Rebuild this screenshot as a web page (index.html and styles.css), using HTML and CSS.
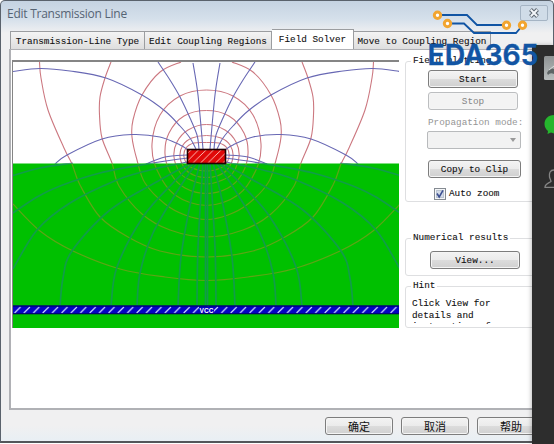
FILE: index.html
```html
<!DOCTYPE html>
<html lang="en">
<head>
  <meta charset="UTF-8" />
  <title>Edit Transmission Line</title>
  <link rel="stylesheet" href="styles.css">
</head>
<body>
  <div class="window">
    <div class="titlebar">
      <span class="title">Edit Transmission Line</span>
      <button class="close" aria-label="Close">
        <svg width="12" height="10" viewBox="0 0 12 10">
          <path d="M2.5 1.5 L9.5 8.5 M9.5 1.5 L2.5 8.5" stroke="#5d6670" stroke-width="4" />
          <path d="M2.8 1.8 L9.2 8.2 M9.2 1.8 L2.8 8.2" stroke="#f4f7fa" stroke-width="2" />
        </svg>
      </button>
    </div>

    <div class="tabs">
      <div class="tab tab-type">Transmission-Line Type</div>
      <div class="tab tab-edit">Edit Coupling Regions</div>
      <div class="tab tab-field active">Field Solver</div>
      <div class="tab tab-move">Move to Coupling Region</div>
    </div>

    <div class="page">
      <svg class="plot" width="386" height="266" viewBox="13 62 386 266">
        <defs>
          <pattern id="hatch-red" width="7.5" height="14" patternUnits="userSpaceOnUse" x="187" y="149">
            <path d="M-9 14 L5 0 M-1.5 14 L12.5 0 M6 14 L20 0" stroke="#ffc4bc" stroke-width="0.9" />
          </pattern>
          <pattern id="hatch-blue" width="9.4" height="8" patternUnits="userSpaceOnUse" x="13" y="306">
            <path d="M1.5 7 L7.5 1" stroke="#c8d0ff" stroke-width="1.1" />
          </pattern>
          <clipPath id="air"><rect x="13" y="62" width="386" height="101.500" /></clipPath>
          <clipPath id="board"><rect x="13" y="163.500" width="386" height="142" /></clipPath>
        </defs>
        <rect x="13" y="61" width="386" height="103" fill="#fff" />
        <rect x="13" y="163.500" width="386" height="165" fill="#00c000" />
        <g id="lines-air" clip-path="url(#air)"></g>
        <g id="lines-board" clip-path="url(#board)"></g>
        <rect x="187.500" y="149.500" width="38" height="14" fill="#e00808" />
        <rect x="187.500" y="149.500" width="38" height="14" fill="url(#hatch-red)" stroke="#200000" stroke-width="1.600" />
        <rect x="13" y="305.500" width="386" height="8.500" fill="#0404c4" />
        <rect x="13" y="306" width="386" height="8" fill="url(#hatch-blue)" />
        <path d="M13 306 H399 M13 313.800 H399" stroke="#000058" stroke-width="1" />
        <rect x="199" y="307" width="15" height="6" fill="#0404c4" />
        <text x="199.500" y="312.500" class="net" textLength="14">VCC</text>
      </svg>

      <div class="side">
        <fieldset class="group plotting">
          <legend>Field plotting</legend>
          <button class="btn">Start</button>
          <button class="btn disabled">Stop</button>
          <label class="mode">Propagation mode:</label>
          <div class="select"><i></i></div>
          <button class="btn clip">Copy to Clip</button>
          <label class="check">
            <svg width="12" height="12" viewBox="0 0 12 12">
              <rect x="0.500" y="0.500" width="11" height="11" fill="#f4f6f8" stroke="#858b92" />
              <rect x="2.500" y="2.500" width="7" height="7" fill="#d3dbe8" stroke="#bac3d0" />
              <path d="M3 5.500 L5.200 9 L9 2.300" fill="none" stroke="#3c4f91" stroke-width="1.600" />
            </svg>
            Auto zoom
          </label>
        </fieldset>
        <fieldset class="group numerical">
          <legend>Numerical results</legend>
          <button class="btn">View...</button>
        </fieldset>
        <fieldset class="group hint">
          <legend>Hint</legend>
          <p>Click View for<br>details and<br>instructions for</p>
        </fieldset>
      </div>
    </div>

    <div class="footer">
      <button class="btn">确定</button>
      <button class="btn">取消</button>
      <button class="btn">帮助</button>
    </div>
  </div>

  <div class="dock">
    <svg width="22" height="399" viewBox="532 45 22 399">
      <defs>
        <linearGradient id="thumb" x1="0" y1="0" x2="0" y2="1">
          <stop offset="0" stop-color="#8f9394" />
          <stop offset="1" stop-color="#b9bebe" />
        </linearGradient>
      </defs>
      <rect x="544" y="56" width="12" height="24" rx="1.500" fill="url(#thumb)" />
      <path d="M547 73 Q550 67 554 69 V74 Q550 72 548 75 Z" fill="#5e6465" />
      <path d="M549 70 L554 66" stroke="#d9dddd" />
      <path d="M554 115 C548 115 544.500 119 544.500 124 C544.500 127 546 129.500 548 131 L547.500 134 L551 132.500 L554 133.500 Z" fill="#25b52d" />
      <path d="M554 170 C550 170 549 173 549.500 177 C550 179 551 180 551 181.500 C549 183 545 183.500 545 187.300 H554" fill="none" stroke="#858585" stroke-width="1.300" />
    </svg>
  </div>

  <svg class="logo" width="116" height="62" viewBox="426 8 116 62">
    <g fill="none" stroke="#1155a4" stroke-width="1.800">
      <path d="M438 15 H467 L477 25 H506" />
      <path d="M448 23.500 H464 L474 33 H516 L522 26" />
    </g>
    <g fill="#fff" stroke="#f2a530" stroke-width="3">
      <circle cx="437.500" cy="15.300" r="3.200" />
      <circle cx="447.500" cy="23.500" r="3.200" />
      <circle cx="506.500" cy="25.300" r="3.200" />
      <circle cx="522.500" cy="25.300" r="3.200" />
    </g>
    <text x="427.500" y="65" textLength="111" lengthAdjust="spacingAndGlyphs">EDA365</text>
  </svg>

  <script src="plot.js"></script>
</body>
</html>
```
FILE: plot.js
```
// left half of every line, the right half is mirrored around the conductor
const AXIS = 206.5;

const potential = [
  [[13, 204], [40, 231], [73, 251], [120, 269], [165, 277], [206.5, 280.500]],
  [[39.5, 62], [41, 78], [48, 110], [64, 148], [72, 164], [80, 185], [100, 217], [128, 237], [160, 251], [206.5, 257]],
  [[111, 62], [105, 78], [100, 97], [99.5, 115], [102, 138], [112, 163], [119, 186], [142, 214], [170, 230], [206.5, 237]],
  [[181, 62], [160, 72], [142, 95], [133, 120], [132, 137], [137, 160], [145, 183], [165, 204], [185, 215], [206.5, 219.5]],
  [[206.5, 90], [180, 96], [160, 115], [152, 144], [157, 170], [175, 195], [206.5, 205.5]],
  [[206.5, 110.5], [184, 116], [169, 133], [165, 154], [171, 174], [185, 188], [206.5, 193.5]],
  [[206.5, 124.5], [188, 130], [177, 142], [174, 157], [181, 174], [193, 181], [206.5, 184]],
  [[206.5, 135.5], [192, 138], [183, 145], [180, 157], [186, 170], [196, 176], [206.5, 177.5]],
  [[206.5, 142.5], [194, 143], [186, 148], [184, 157], [189, 166], [198, 170], [206.5, 171]]
];

const field = [
  [[13, 71.5], [40, 68.5], [70, 71], [106, 78], [142, 95], [165, 111], [180, 126], [190, 138], [196, 149]],
  [[55, 164], [67, 155], [102, 139], [132, 134.5], [160, 137], [180, 145], [188, 150]],
  [[146, 164], [165, 157], [187, 155]],
  [[158, 62], [170, 80], [180, 97], [190, 118], [197, 135], [199, 149]],
  [[193, 63], [198, 95], [203, 149]],
  [[13, 213], [37, 197], [60, 186], [100, 173], [147, 164], [187, 158]],
  [[13, 269], [37, 230], [70, 203], [117, 180], [150, 170], [187, 162]],
  [[13, 175.500], [40, 168], [73, 163]],
  [[60, 306], [63, 278], [72, 251], [110, 210], [160, 180], [191, 163]],
  [[111, 306], [117, 267], [143, 217], [173, 183], [194, 163]],
  [[137, 306], [140, 273], [153, 233], [180, 187], [197, 163]],
  [[178, 306], [181, 257], [191, 200], [200, 163]],
  [[197, 306], [198, 247], [203, 163]],
  [[205.5, 306], [205.5, 163]]
];

// Catmull-Rom through the points
function toPath(pts) {
  let d = `M${pts[0]}`;
  for (let i = 0; i < pts.length - 1; i++) {
    const a = pts[i - 1] || pts[i], b = pts[i], c = pts[i + 1], e = pts[i + 2] || c;
    // keep the line level where it crosses the axis
    let x1 = b[0] + (c[0] - a[0]) / 6, y1 = b[1] + (c[1] - a[1]) / 6;
    let x2 = c[0] - (e[0] - b[0]) / 6, y2 = c[1] - (e[1] - b[1]) / 6;
    if (b[0] === AXIS) {
      x1 = b[0] + (c[0] - b[0]) / 3;
      y1 = b[1];
    }
    if (c[0] === AXIS) {
      x2 = c[0] - (c[0] - b[0]) / 3;
      y2 = c[1];
    }
    d += `C${x1} ${y1} ${x2} ${y2} ${c}`;
  }
  return d;
}

function draw(id, className, lines) {
  let html = "";
  lines.forEach(pts => {
    const mirrored = pts.map(([x, y]) => [2 * AXIS - x, y]);
    html += `<path class="${className}" d="${toPath(pts)}" /><path class="${className}" d="${toPath(mirrored)}" />`;
  });
  document.getElementById(id).innerHTML += html;
}

["lines-air", "lines-board"].forEach(id => {
  draw(id, "potential", potential);
  draw(id, "field", field);
});
```
FILE: styles.css
```css
* {
  box-sizing: border-box;
}

body {
  margin: 0;
  width: 554px;
  height: 444px;
  position: relative;
  overflow: hidden;
  background: #fff;
  font-family: "Liberation Mono", monospace;
  font-size: 9.35px;
  color: #111;
}

.window {
  width: 554px;
  height: 443px;
  display: flex;
  flex-direction: column;
  border: 1px solid #5a626c;
  border-bottom: 2px solid #54565a;
  border-radius: 5px 5px 0 0;
  background: linear-gradient(#c5d3e2 0, #d5e0eb 18px, #f0f0f1 32px, #f0f0f1 425px, #e8eff4);
}

.titlebar {
  flex: none;
  height: 28px;
  display: flex;
  justify-content: space-between;
  align-items: flex-start;
  padding: 4px 5px 0 6px;
}

.title {
  font: 12px/17px "Open Sans", sans-serif;
  color: #566474;
  letter-spacing: -0.25px;
}

.close {
  width: 28px;
  height: 16px;
  display: flex;
  align-items: center;
  justify-content: center;
  padding: 0;
  border: 1px solid #a5b4c4;
  border-radius: 2px;
  background: #d0dce8;
}

.tabs {
  flex: none;
  height: 20px;
  display: flex;
  align-items: flex-end;
  padding-left: 9px;
}

.tab {
  height: 18px;
  border: 1px solid #9b9da0;
  border-left-width: 0;
  border-bottom: 0;
  background: linear-gradient(#f4f4f4, #dedede);
  text-align: center;
  line-height: 19px;
  white-space: nowrap;
  -webkit-text-stroke: 0.1px #111;
}

.tab-type {
  width: 135px;
  border-left-width: 1px;
}

.tab-edit {
  width: 127px;
}

.tab-field {
  width: 82px;
}

.tab-move {
  width: 137px;
}

.tab.active {
  height: 20px;
  background: #fff;
}

.page {
  flex: none;
  height: 361px;
  margin-left: 8px;
  display: flex;
  align-items: flex-start;
  border: 1px solid #b0b1b5;
  border-width: 1px 0 2px 2px;
  background: #fff;
}

.plot {
  flex: none;
  margin: 10px 0 0 1px;
  border: 1px solid #858585;
  border-width: 2px 0 0 1px;
  box-sizing: content-box;
}

.potential,
.field {
  fill: none;
  stroke-width: 1.1;
}

.potential {
  stroke: #cc7880;
}

.field {
  stroke: #6868b4;
}

#lines-board .potential {
  stroke: #5da515;
  stroke-width: 1.2;
}

#lines-board .field {
  stroke: #109d49;
  stroke-width: 1.7;
}

.net {
  font: bold 6.5px "Liberation Sans", sans-serif;
  fill: #fff;
}

.side {
  width: 150px;
  margin-left: 6px;
  padding-top: 5px;
}

.group {
  width: 150px;
  margin: 0;
  padding: 0 0 0 22px;
  border: 1px solid #dedfe1;
  border-radius: 3px;
}

.group legend {
  margin-left: -17px;
  padding: 0 2px;
  height: 12px;
  line-height: 12px;
  white-space: nowrap;
  -webkit-text-stroke: 0.1px #111;
}

.plotting {
  height: 147px;
  padding-top: 3px;
}

.numerical {
  height: 44px;
  margin-top: 30px;
}

.hint {
  height: 48px;
  margin-top: 4px;
}

.btn {
  display: block;
  width: 90px;
  height: 18px;
  padding: 0;
  border: 1px solid #7d7d7d;
  border-radius: 3px;
  background: linear-gradient(#f3f3f3 0, #ebebeb 50%, #dcdcdc 50%, #d0d0d0);
  box-shadow: inset 0 0 0 1px #f5f5f5;
  font: 9.35px/15px "Liberation Mono", "Noto Sans CJK SC", monospace;
  color: #111;
  -webkit-text-stroke: 0.1px #111;
}

.plotting .btn {
  margin-bottom: 4px;
}

.plotting .btn.disabled {
  border-color: #bcbec0;
  background: #f3f3f3;
  color: #858585;
  -webkit-text-stroke: 0;
}

.mode {
  display: block;
  height: 17px;
  line-height: 17px;
  color: #959595;
}

.select {
  width: 94px;
  height: 18px;
  margin-left: -1px;
  display: flex;
  align-items: center;
  justify-content: flex-end;
  padding-right: 4px;
  border: 1px solid #b8babc;
  border-radius: 2px;
  background: #f2f2f2;
}

.select i {
  border: 3px solid transparent;
  border-top: 4px solid #999;
  border-bottom: 0;
}

.plotting .clip {
  width: 93px;
  margin: 11px 0 10px;
}

.check {
  display: flex;
  align-items: center;
  gap: 3px;
  padding-left: 6px;
  line-height: 12px;
  -webkit-text-stroke: 0.1px #111;
}

.numerical .btn {
  margin: 7px 0 0 2px;
}

.hint p {
  height: 26px;
  margin: 6px 0 0 -16px;
  overflow: hidden;
  line-height: 11.5px;
  -webkit-text-stroke: 0.1px #111;
}

.footer {
  display: flex;
  gap: 8px;
  padding: 7px 0 0 324px;
}

.footer .btn {
  flex: none;
  width: 68px;
  font-family: "Noto Sans CJK SC", sans-serif;
  font-size: 11px;
  -webkit-text-stroke: 0;
}

.dock {
  position: absolute;
  left: 532px;
  top: 45px;
  width: 22px;
  height: 399px;
  background: #2d2d2d;
  box-shadow: -1px 0 4px rgba(0, 0, 0, 0.25);
}

.logo {
  position: absolute;
  left: 426px;
  top: 8px;
}

.logo text {
  font: 600 28.5px Inter, sans-serif;
  fill: #1155a4;
  stroke: #1155a4;
  stroke-width: 0.5;
}
```
